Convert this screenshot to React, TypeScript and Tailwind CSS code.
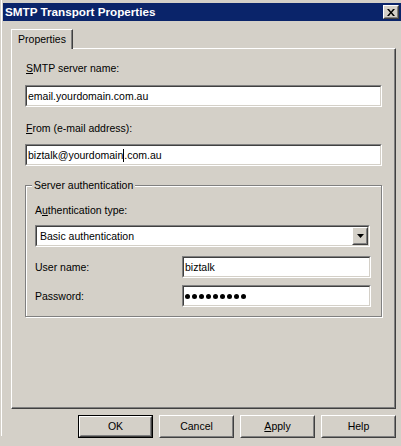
import React from "react";

function Sunken({ className = "", children }: { className?: string; children?: React.ReactNode }) {
  return (
    <div className={"border border-t-[#808080] border-l-[#808080] border-b-white border-r-white " + className}>
      <div className="h-full border border-t-[#404040] border-l-[#404040] border-b-[#d4d0c8] border-r-[#d4d0c8] bg-white flex items-center">
        {children}
      </div>
    </div>
  );
}

function Raised({ className = "", children }: { className?: string; children?: React.ReactNode }) {
  return (
    <div className={"border border-t-white border-l-white border-b-[#404040] border-r-[#404040] bg-[#d4d0c8] " + className}>
      <div className="h-full border border-t-[#d4d0c8] border-l-[#d4d0c8] border-b-[#808080] border-r-[#808080] flex items-center justify-center">
        {children}
      </div>
    </div>
  );
}

function Btn({ children, def = false }: { children: React.ReactNode; def?: boolean }) {
  if (def) {
    return (
      <div className="w-[75px] h-[23px] border border-black">
        <Raised className="h-full">{children}</Raised>
      </div>
    );
  }
  return <Raised className="w-[75px] h-[23px]">{children}</Raised>;
}

export default function App() {
  return (
    <div className="w-[401px] h-[446px] bg-[#d4d0c8] flex overflow-hidden font-['Liberation_Sans',Arial,sans-serif] text-[10.5px] text-black leading-[13px]">
      <div className="ml-[1px] w-[1px] h-[436px] bg-white shrink-0" />
      <div className="ml-[1px] flex-1 flex flex-col">
        {/* Title bar */}
        <div className="mt-[3px] h-[18px] bg-[#0a246a] flex items-center justify-between pl-[2px] pr-[2px]">
          <span className="text-white font-bold text-[11.7px] leading-[14px]">SMTP Transport Properties</span>
          <Raised className="w-[16px] h-[14px]">
            <svg width="8" height="7" viewBox="0 0 8 7">
              <path d="M0 0h2l2 2.4l2-2.4h2l-3 3.5l3 3.5h-2l-2-2.4l-2 2.4h-2l3-3.5z" fill="#000" />
            </svg>
          </Raised>
        </div>

        {/* Tabs */}
        <div className="ml-[8px] mt-[8px] flex flex-col">
          <div className="relative z-10 -mb-[1px] w-[62px] h-[20px] bg-[#d4d0c8] border-t border-l border-r border-t-white border-l-white border-r-[#404040] shadow-[inset_-1px_0_0_#808080] flex items-center justify-center pb-[1px]">
            Properties
          </div>
          <div className="w-[385px] h-[361px] border border-t-white border-l-white border-b-[#404040] border-r-[#404040] shadow-[inset_-1px_-1px_0_#808080] flex flex-col pl-[13px]">
            <div className="mt-[13px] pl-[1px]">
              <u>S</u>MTP server name:
            </div>
            <Sunken className="mt-[10px] w-[357px] h-[22px]">
              <span className="pl-[1px]">email.yourdomain.com.au</span>
            </Sunken>
            <div className="mt-[15px] pl-[1px]">
              <u>F</u>rom (e-mail address):
            </div>
            <Sunken className="mt-[9px] w-[357px] h-[22px]">
              <span className="pl-[1px] flex items-center">
                biztalk@yourdomain
                <span className="inline-block w-[1px] h-[13px] bg-black" />
                .com.au
              </span>
            </Sunken>

            {/* Group box */}
            <div className="relative mt-[19px] w-[357px] h-[132px] border border-[#808080] shadow-[inset_1px_1px_0_#fff,1px_1px_0_#fff] flex flex-col pl-[9px]">
              <span className="absolute left-[6px] -top-[7px] px-[2px] bg-[#d4d0c8]">Server authentication</span>
              <div className="mt-[18px]">
                A<u>u</u>thentication type:
              </div>
              <Sunken className="mt-[8px] w-[335px] h-[22px]">
                <div className="flex-1 h-full flex items-center justify-between">
                  <span className="pl-[3px]">Basic authentication</span>
                  <Raised className="w-[16px] h-full">
                    <svg width="7" height="4" viewBox="0 0 7 4">
                      <path d="M0 0h7l-3.5 4z" fill="#000" />
                    </svg>
                  </Raised>
                </div>
              </Sunken>
              <div className="mt-[9px] flex items-center">
                <span className="w-[147px]">User name:</span>
                <Sunken className="w-[189px] h-[22px]">
                  <span className="pl-[1px]">biztalk</span>
                </Sunken>
              </div>
              <div className="mt-[7px] flex items-center">
                <span className="w-[147px]">Password:</span>
                <Sunken className="w-[189px] h-[22px]">
                  <div className="pl-[1px] flex gap-[2px]">
                    {Array.from({ length: 9 }).map((_, i) => (
                      <span key={i} className="w-[5px] h-[5px] rounded-full bg-black" />
                    ))}
                  </div>
                </Sunken>
              </div>
            </div>
          </div>

          {/* Buttons */}
          <div className="w-[385px] mt-[6px] flex justify-end gap-[6px]">
            <Btn def>OK</Btn>
            <Btn>Cancel</Btn>
            <Btn>
              <span>
                <u>A</u>pply
              </span>
            </Btn>
            <Btn>Help</Btn>
          </div>
        </div>
      </div>
    </div>
  );
}
